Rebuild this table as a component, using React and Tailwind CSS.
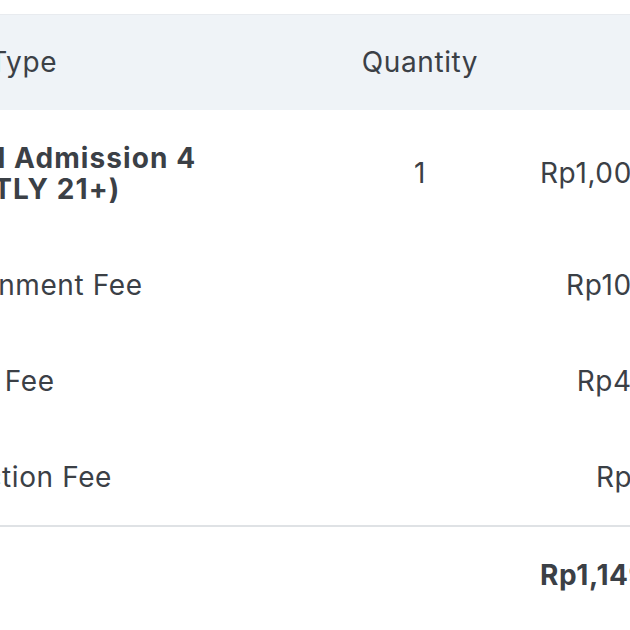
import React from "react";

const ROWS = [
  { name: "General Admission 4 (STRICTLY 21+)", qty: "1", price: "Rp1,000,000", bold: true },
  { name: "Entertainment Fee", qty: "", price: "Rp100,000" },
  { name: "Service Fee", qty: "", price: "Rp40,000" },
  { name: "Transaction Fee", qty: "", price: "Rp9,500" },
];

const COLS = "grid grid-cols-[408px_240px_172px]";

function Row({ row }) {
  return (
    <div className={`${COLS} items-center py-[32.5px] leading-[31px]`}>
      <div className={row.bold ? "font-bold tracking-[1.1px] pr-[80px]" : ""}>{row.name}</div>
      <div className="text-center">{row.qty}</div>
      <div className="text-right">{row.price}</div>
    </div>
  );
}

export default function App() {
  return (
    <div
      className="w-[630px] h-[630px] overflow-hidden bg-white text-[#3b4046] text-[28px] tracking-[0.6px]"
      style={{ fontFamily: "Inter, 'Noto Sans', sans-serif" }}
    >
      <div className="ml-[-108px] w-[820px] pt-[14px]">
        <div className={`${COLS} items-center h-[96px] bg-[#eff3f7] border-t border-[#e8ebef] leading-[31px]`}>
          <div className="pl-[4px]">Ticket Type</div>
          <div className="text-center">Quantity</div>
          <div className="text-right">Price</div>
        </div>
        {ROWS.map((r) => (
          <Row key={r.name} row={r} />
        ))}
        <div className="h-[2px] bg-[#dfe2e5]" />
        <div className={`${COLS} items-center py-[32.5px] leading-[31px]`}>
          <div />
          <div />
          <div className="text-right font-bold">Rp1,149,500</div>
        </div>
      </div>
    </div>
  );
}
